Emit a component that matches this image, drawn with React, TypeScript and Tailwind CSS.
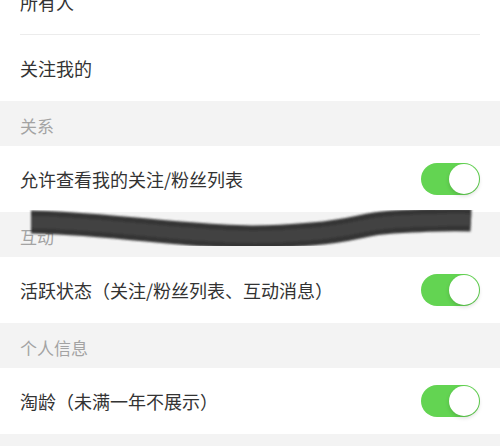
import React from "react";

function Toggle() {
  return (
    <div className="relative h-[32px] w-[59px] rounded-full bg-[#63d452]">
      <div className="absolute right-[1px] top-[1px] h-[30px] w-[30px] rounded-full bg-white shadow-[0_2px_4px_rgba(0,0,0,0.15)]" />
    </div>
  );
}

function Row({ label, toggle, divider }: { label: string; toggle?: boolean; divider?: boolean }) {
  return (
    <div className="bg-white px-[20px]">
      <div className={`flex h-[66px] items-center justify-between ${divider ? "border-b border-[#ececec]" : ""}`}>
        <span className="text-[18px] leading-none text-[#333333]">{label}</span>
        {toggle ? <Toggle /> : null}
      </div>
    </div>
  );
}

function Section({ label }: { label: string }) {
  return (
    <div className="flex h-[45px] items-center bg-[#f3f3f3] px-[20px] pt-[4px]">
      <span className="text-[17px] leading-none text-[#a3a3a3]">{label}</span>
    </div>
  );
}

export default function App() {
  return (
    <div
      className="relative h-[446px] w-[500px] overflow-hidden bg-[#f3f3f3]"
      style={{ fontFamily: '"Noto Sans CJK SC", "Noto Sans", sans-serif' }}
    >
      <div className="-mt-[31px] flex flex-col">
        <Row label="所有人" divider />
        <Row label="关注我的" />
        <Section label="关系" />
        <Row label="允许查看我的关注/粉丝列表" toggle />
        <Section label="互动" />
        <Row label="活跃状态（关注/粉丝列表、互动消息）" toggle />
        <Section label="个人信息" />
        <Row label="淘龄（未满一年不展示）" toggle />
      </div>
      <svg className="pointer-events-none absolute left-0 top-0" width="500" height="446" viewBox="0 0 500 446">
        <defs>
          <filter id="soft" x="-5%" y="-50%" width="110%" height="200%">
            <feGaussianBlur stdDeviation="0.8" />
          </filter>
        </defs>
        <g filter="url(#soft)">
          <path
            d="M31 222 C 70 222, 120 228, 180 233 S 265 238, 312 234 S 360 224, 393 222 S 450 219, 471 220"
            fill="none"
            stroke="#363636"
            strokeWidth="23"
            strokeLinecap="butt"
            strokeLinejoin="round"
          />
          <path
            d="M31 222 C 70 222, 120 228, 180 233 S 265 238, 312 234 S 360 224, 393 222 S 450 219, 471 220"
            fill="none"
            stroke="#434343"
            strokeWidth="12"
            strokeLinecap="butt"
          />
        </g>
      </svg>
    </div>
  );
}
